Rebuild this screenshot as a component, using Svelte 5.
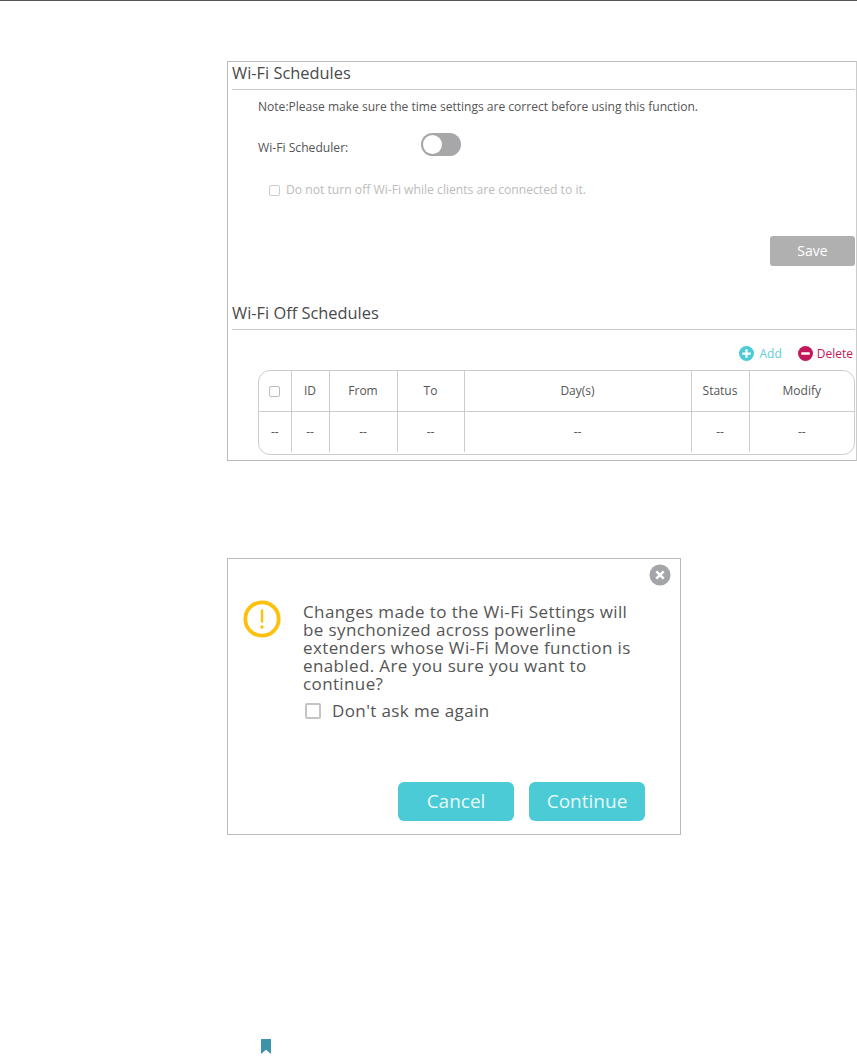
<script>
  const columns = [
    { key: 'check', width: 32 },
    { key: 'ID', width: 38 },
    { key: 'From', width: 68 },
    { key: 'To', width: 67 },
    { key: 'Day(s)', width: 227 },
    { key: 'Status', width: 58 },
    { key: 'Modify', width: 105 }
  ];
</script>

<div class="page">
  <div class="top-rule"></div>

  <section class="panel">
    <h2 class="title">Wi-Fi Schedules</h2>
    <div class="body">
      <p class="note">Note:Please make sure the time settings are correct before using this function.</p>
      <div class="scheduler">
        <span class="scheduler-label">Wi-Fi Scheduler:</span>
        <span class="toggle"><span class="knob"></span></span>
      </div>
      <label class="keep-on">
        <span class="box small muted"></span>
        <span>Do not turn off Wi-Fi while clients are connected to it.</span>
      </label>
    </div>
    <div class="save-row"><button class="save">Save</button></div>

    <h2 class="title second">Wi-Fi Off Schedules</h2>
    <div class="actions">
      <span class="action add">
        <svg viewBox="0 0 16 16" width="15" height="15"><circle cx="8" cy="8" r="8" fill="#4acbd6" /><path d="M8 3.5v9M3.5 8h9" stroke="#fff" stroke-width="2.4" /></svg>
        Add
      </span>
      <span class="action del">
        <svg viewBox="0 0 16 16" width="15" height="15"><circle cx="8" cy="8" r="8" fill="#c2185b" /><path d="M3.5 8h9" stroke="#fff" stroke-width="2.6" /></svg>
        Delete
      </span>
    </div>
    <div class="table-wrap">
      <table>
        <colgroup>
          {#each columns as col}
            <col style="width: {col.width}px" />
          {/each}
        </colgroup>
        <thead>
          <tr>
            {#each columns as col}
              <th>
                {#if col.key === 'check'}<span class="box small head-box"></span>{:else}{col.key}{/if}
              </th>
            {/each}
          </tr>
        </thead>
        <tbody>
          <tr>
            {#each columns as col}
              <td>--</td>
            {/each}
          </tr>
        </tbody>
      </table>
    </div>
  </section>

  <section class="dialog">
    <div class="close-row">
      <svg viewBox="0 0 22 22" width="22" height="22"><circle cx="11" cy="11" r="10.5" fill="#a3a5a8" /><path d="M7.3 7.3l7.4 7.4M14.7 7.3l-7.4 7.4" stroke="#fff" stroke-width="2.6" /></svg>
    </div>
    <div class="message">
      <svg class="warn" viewBox="0 0 38 38" width="38" height="38">
        <circle cx="19" cy="19" r="16.7" fill="none" stroke="#fdc10d" stroke-width="3.8" />
        <path d="M19 9.5v13" stroke="#fdc10d" stroke-width="2.4" />
        <circle cx="19" cy="27" r="1.7" fill="#fdc10d" />
      </svg>
      <div class="message-text">
        <p>Changes made to the Wi-Fi Settings will<br />be synchonized across powerline<br />extenders whose Wi-Fi Move function is<br />enabled. Are you sure you want to<br />continue?</p>
        <label class="again"><span class="box large"></span><span>Don't ask me again</span></label>
      </div>
    </div>
    <div class="buttons">
      <button class="primary">Cancel</button>
      <button class="primary">Continue</button>
    </div>
  </section>

  <div class="footer">
    <svg viewBox="0 0 10 16" width="10" height="15" preserveAspectRatio="none"><path d="M0 0h10v16L5 11.5 0 16z" fill="#3d93a9" /></svg>
  </div>
</div>

<style>
  :global(body) {
    margin: 0;
    background: #fff;
  }

  .page {
    height: 1056px;
    overflow: hidden;
    font-family: "Open Sans", "Noto Sans", sans-serif;
    color: #555;
  }

  .top-rule {
    height: 1px;
    background: #555;
  }

  .panel {
    box-sizing: border-box;
    width: 630px;
    height: 400px;
    margin: 60px 0 0 227px;
    padding: 0 1px 0 4px;
    border: 1px solid #bbb;
    border-right-color: #ccc;
  }

  .title {
    height: 27px;
    margin: 0;
    border-bottom: 1px solid #c8c8c8;
    font-size: 16.4px;
    font-weight: 400;
    line-height: 21px;
    color: #4a4a4a;
  }

  .body {
    padding: 8px 0 0 26px;
  }

  .note {
    margin: 0;
    font-size: 12.05px;
    line-height: 18px;
    color: #555;
  }

  .scheduler {
    display: flex;
    align-items: flex-start;
    margin-top: 17px;
  }

  .scheduler-label {
    width: 163px;
    padding-top: 6px;
    font-size: 12.15px;
    line-height: 18px;
  }

  .toggle {
    display: flex;
    align-items: center;
    box-sizing: border-box;
    width: 40px;
    height: 23px;
    padding: 0 2px;
    border-radius: 12px;
    background: #a7a7aa;
  }

  .knob {
    width: 19px;
    height: 19px;
    border-radius: 50%;
    background: #fff;
  }

  .keep-on {
    display: flex;
    align-items: center;
    gap: 6px;
    margin: 24px 0 0 11px;
    font-size: 12.15px;
    line-height: 18px;
    color: #bbb;
  }

  .box {
    display: inline-block;
    box-sizing: border-box;
    border: 1px solid #bbb;
    border-radius: 2px;
    background: #fff;
  }

  .box.small {
    width: 11px;
    height: 11px;
  }

  .box.muted {
    border-color: #ccc;
  }

  .box.large {
    width: 16px;
    height: 16px;
    border-width: 2px;
    border-color: #c4c4c4;
  }

  .save-row {
    display: flex;
    justify-content: flex-end;
    margin-top: 37px;
  }

  .save {
    width: 85px;
    height: 30px;
    padding: 0 0 2px;
    border: 0;
    border-radius: 3px;
    background: #b0b0b0;
    color: #fff;
    font-family: inherit;
    font-size: 14px;
  }

  .title.second {
    margin-top: 36px;
  }

  .actions {
    display: flex;
    justify-content: flex-end;
    gap: 16px;
    height: 15px;
    margin-top: 16px;
    padding-right: 2px;
    font-size: 12px;
    line-height: 15px;
  }

  .action {
    display: flex;
    align-items: center;
    gap: 5px;
  }

  .add {
    color: #62cdd8;
  }

  .del {
    gap: 4px;
    color: #c2185b;
  }

  .table-wrap {
    box-sizing: border-box;
    height: 85px;
    margin: 9px 0 0 26px;
    border: 1px solid #ccc;
    border-radius: 12px;
    overflow: hidden;
  }

  table {
    width: 100%;
    table-layout: fixed;
    border-collapse: collapse;
    font-size: 12px;
    color: #555;
  }

  th,
  td {
    padding: 0 0 2px;
    text-align: center;
    font-weight: 400;
    border-left: 1px solid #ccc;
  }

  th:first-child,
  td:first-child {
    border-left: 0;
  }

  th {
    height: 38px;
    border-bottom: 1px solid #ccc;
  }

  td {
    height: 38px;
  }

  .head-box {
    vertical-align: middle;
  }

  .dialog {
    box-sizing: border-box;
    width: 454px;
    height: 277px;
    margin: 97px 0 0 227px;
    padding: 5px 19px 0 15px;
    border: 1px solid #bbb;
  }

  .close-row {
    display: flex;
    justify-content: flex-end;
    height: 22px;
    margin-right: -10px;
  }

  .message {
    display: flex;
    gap: 22px;
    margin-top: 17px;
  }

  .warn {
    flex: none;
    margin-top: -3px;
  }

  .message-text p {
    margin: 0;
    font-size: 17px;
    letter-spacing: 0.38px;
    line-height: 18px;
    color: #555;
  }

  .again {
    display: flex;
    align-items: center;
    gap: 11px;
    margin: 8px 0 0 2px;
    font-size: 17px;
    letter-spacing: 0.38px;
    line-height: 20px;
  }

  .buttons {
    display: flex;
    justify-content: flex-end;
    gap: 15px;
    margin-top: 61px;
    padding-right: 16px;
  }

  .primary {
    width: 116px;
    height: 39px;
    padding: 0 0 2px;
    border: 0;
    border-radius: 6px;
    background: #4acbd6;
    color: #e8f9fa;
    font-family: inherit;
    font-size: 19px;
  }

  .footer {
    display: flex;
    height: 15px;
    margin: 204px 0 0 261px;
  }
</style>
